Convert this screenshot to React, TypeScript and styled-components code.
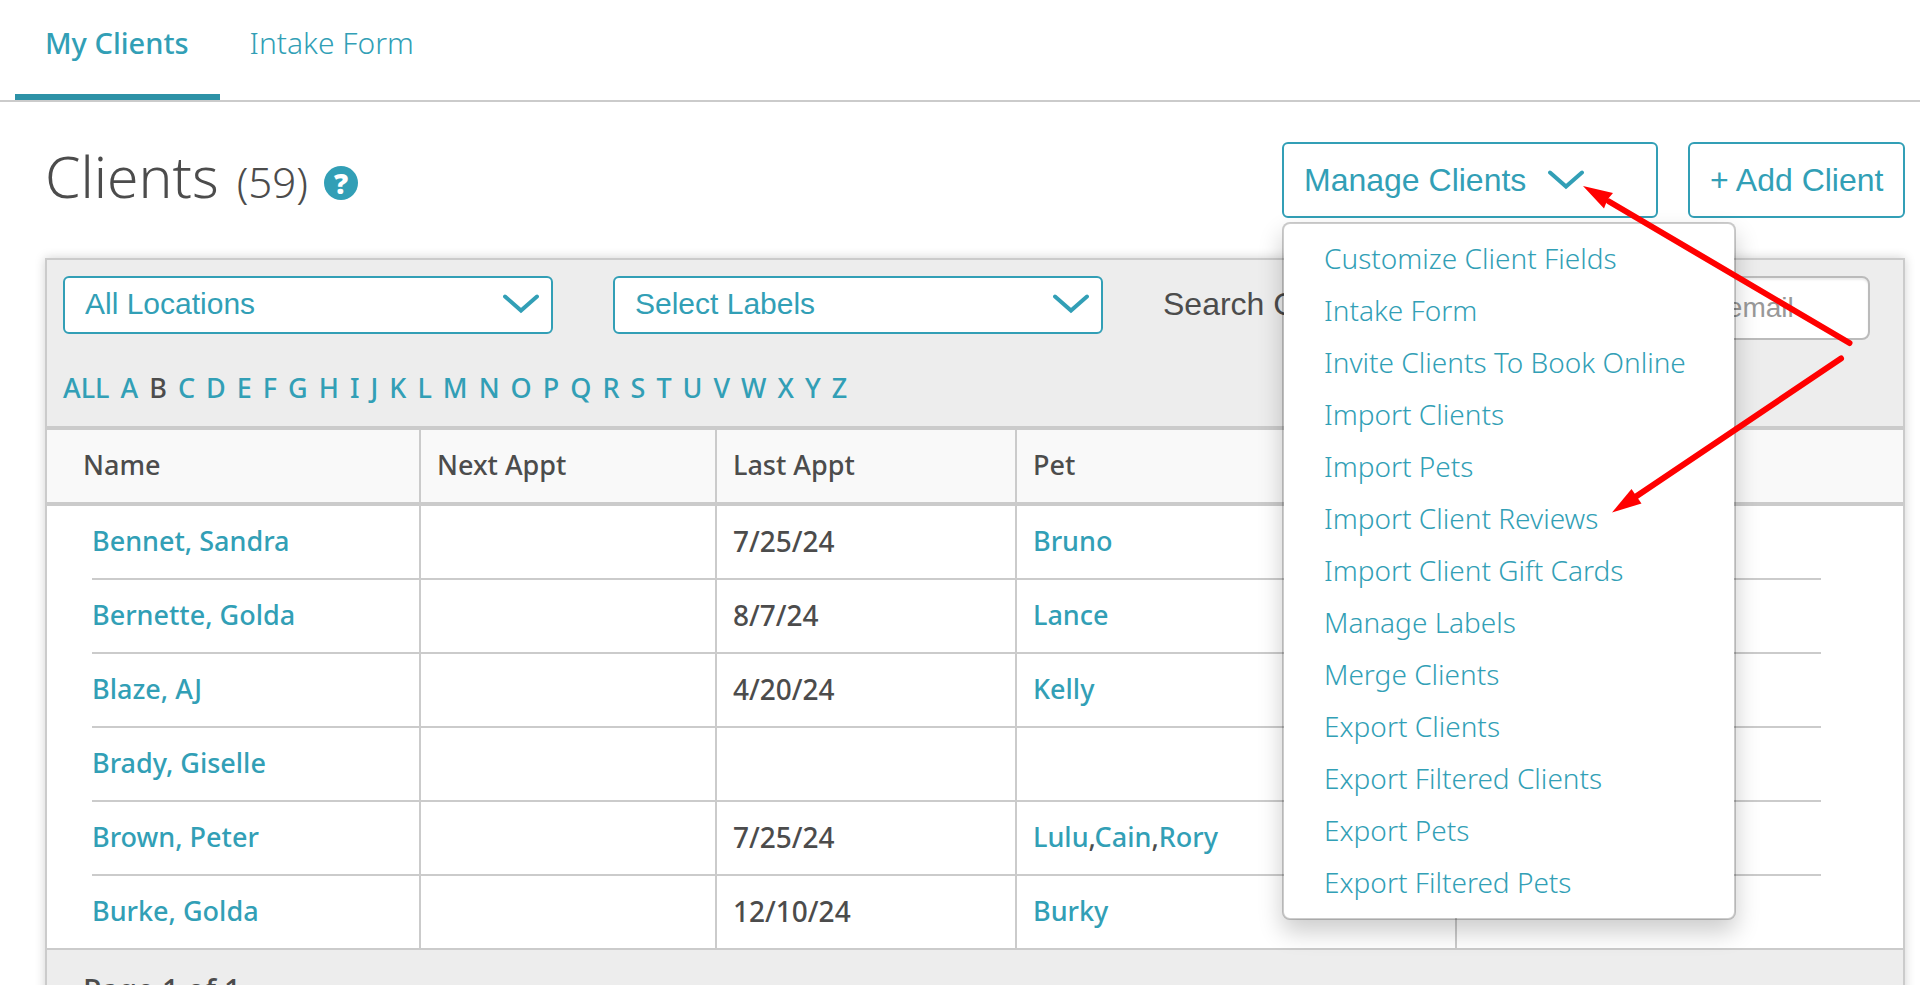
import React from 'react';
import styled, { createGlobalStyle } from 'styled-components';

const color = {
  teal: '#329fb6',
  tealDark: '#2d92a7',
  text: '#4c4c4c',
  line: '#cbcbcb',
  bar: '#ededed',
  head: '#f9f9f9',
  annotation: '#ff0000',
};
const humanist = '"Noto Sans", "Open Sans", sans-serif';
const grotesque = '"Liberation Sans", Arial, sans-serif';

const GlobalStyle = createGlobalStyle`
  *, *::before, *::after { box-sizing: border-box; }
  html { background: #fff; }
  body { margin: 0; font-family: ${humanist}; color: ${color.text}; overflow-x: hidden; }
  a { color: ${color.teal}; text-decoration: none; }
  h1, p, ul { margin: 0; padding: 0; }
`;

const Tabs = styled.nav`
  display: flex;
  height: 102px;
  padding-left: 15px;
  border-bottom: 2px solid ${color.line};
`;

const Tab = styled.a<{ $active?: boolean }>`
  padding: 23px 31px 0 30px;
  font-size: ${(p) => (p.$active ? 29 : 30)}px;
  line-height: 40px;
  font-weight: ${(p) => (p.$active ? 500 : 300)};
  border-bottom: 6px solid ${(p) => (p.$active ? color.tealDark : 'transparent')};
`;

const PageHeader = styled.header`
  display: flex;
  justify-content: space-between;
  align-items: flex-start;
  padding: 40px 15px 40px 45px;
`;

const TitleGroup = styled.div`
  display: flex;
  align-items: baseline;
  gap: 16px;
`;

const Title = styled.h1`
  display: flex;
  align-items: baseline;
  gap: 18px;
  font-size: 57px;
  line-height: 68px;
  font-weight: 300;
`;

const Count = styled.span`
  font-size: 42px;
  line-height: 40px;
`;

const HelpButton = styled.button`
  align-self: flex-end;
  width: 34px;
  height: 34px;
  margin-bottom: 10px;
  padding: 0;
  border: 0;
  border-radius: 50%;
  background: ${color.teal};
  color: #fff;
  font: 900 28px/34px ${humanist};
`;

const Actions = styled.div`
  display: flex;
  gap: 30px;
`;

const ActionButton = styled.button<{ $width: number }>`
  display: flex;
  align-items: center;
  gap: 22px;
  width: ${(p) => p.$width}px;
  height: 76px;
  padding: 0 20px;
  border: 2px solid ${color.teal};
  border-radius: 6px;
  background: #fff;
  color: ${color.teal};
  font: 32px/40px ${grotesque};
  white-space: nowrap;
`;

const MenuAnchor = styled.div`
  position: relative;
`;

const Menu = styled.ul`
  position: absolute;
  z-index: 2;
  top: 80px;
  left: 0;
  width: 454px;
  padding: 8px 0 10px;
  list-style: none;
  background: #fff;
  background-clip: padding-box;
  border: 2px solid rgba(0, 0, 0, 0.2);
  border-radius: 8px;
  box-shadow: 0 12px 24px rgba(0, 0, 0, 0.2);
`;

const MenuLink = styled.a`
  display: block;
  padding: 0 40px;
  font-size: 28px;
  line-height: 52px;
  font-weight: 300;
  white-space: nowrap;
`;

const Annotation = styled.svg`
  position: absolute;
  z-index: 3;
  top: 40px;
  left: 300px;
  overflow: visible;
  pointer-events: none;
`;

const Panel = styled.main`
  margin: 0 15px 0 45px;
  border: 2px solid ${color.line};
  box-shadow: 0 0 10px rgba(0, 0, 0, 0.18);
  background: #fff;
`;

const Toolbar = styled.div`
  padding: 16px 33px 20px 16px;
  background: ${color.bar};
  border-bottom: 4px solid ${color.line};
`;

const Filters = styled.div`
  display: flex;
  align-items: flex-start;
  gap: 60px;
`;

const SelectBox = styled.div`
  position: relative;
  flex: 0 1 490px;

  svg {
    position: absolute;
    top: 18px;
    right: 14px;
    pointer-events: none;
  }
`;

const Select = styled.select`
  display: block;
  appearance: none;
  width: 100%;
  height: 58px;
  padding: 0 60px 2px 20px;
  border: 2px solid ${color.teal};
  border-radius: 6px;
  background: #fff;
  color: ${color.teal};
  font: 30px/40px ${grotesque};
`;

const SearchField = styled.div`
  display: flex;
  flex: 1;
  gap: 8px;
  min-width: 0;
`;

const SearchLabel = styled.label`
  font: 32px/56px ${grotesque};
  white-space: nowrap;
`;

const SearchInput = styled.input`
  flex: 1;
  min-width: 0;
  height: 64px;
  padding: 0 8px;
  border: 2px solid #bbb;
  border-radius: 8px;
  background: #fff;
  box-shadow: inset 0 2px 2px rgba(0, 0, 0, 0.08);
  font: 28px/40px ${grotesque};

  &::placeholder { color: #999; opacity: 1; }
`;

const Alphabet = styled.nav`
  display: flex;
  gap: 11px;
  margin-top: 30px;
  font-size: 27px;
  line-height: 36px;
  font-weight: 500;
`;

const Letter = styled.a<{ $current?: boolean }>`
  color: ${(p) => (p.$current ? color.text : color.teal)};
`;

const ClientTable = styled.table`
  width: 100%;
  table-layout: fixed;
  border-collapse: separate;
  border-spacing: 0;
  font-size: 27px;
  line-height: 36px;
  font-weight: 500;
`;

const HeadCell = styled.th`
  height: 76px;
  padding: 0 16px 2px;
  text-align: left;
  font-weight: 500;
  background: ${color.head};
  border-bottom: 4px solid ${color.line};

  &:first-child { padding-left: 36px; }
  & + & { border-left: 2px solid ${color.line}; }
`;

const Cell = styled.td<{ $numeric?: boolean }>`
  padding: 0;
  font-size: ${(p) => (p.$numeric ? 28 : 27)}px;
  & + & { border-left: 2px solid ${color.line}; }
`;

const CellBody = styled.div`
  height: 74px;
  padding: 17px 16px;
  border-bottom: 2px solid ${color.line};

  td:first-child > & { margin-left: 45px; padding-left: 0; }
  td:last-child > & { margin-right: 82px; }
  tr:last-child > td > & { height: 72px; border-bottom: 0; }
`;

const Pager = styled.footer`
  padding: 22px 36px;
  background: ${color.bar};
  border-top: 2px solid ${color.line};
  font-size: 30px;
  line-height: 36px;
  font-weight: 500;
`;

const Chevron = () => (
  <svg width="36" height="20" viewBox="0 0 36 20" fill="none" aria-hidden="true">
    <path d="M2 2.5 18 16.5 34 2.5" stroke={color.teal} strokeWidth="4" strokeLinecap="round" />
  </svg>
);

const menuItems = [
  'Customize Client Fields',
  'Intake Form',
  'Invite Clients To Book Online',
  'Import Clients',
  'Import Pets',
  'Import Client Reviews',
  'Import Client Gift Cards',
  'Manage Labels',
  'Merge Clients',
  'Export Clients',
  'Export Filtered Clients',
  'Export Pets',
  'Export Filtered Pets',
];

const letters = ['ALL', ...'ABCDEFGHIJKLMNOPQRSTUVWXYZ'];

const clients = [
  { name: 'Bennet, Sandra', last: '7/25/24', pets: ['Bruno'] },
  { name: 'Bernette, Golda', last: '8/7/24', pets: ['Lance'] },
  { name: 'Blaze, AJ', last: '4/20/24', pets: ['Kelly'] },
  { name: 'Brady, Giselle', last: '', pets: [] },
  { name: 'Brown, Peter', last: '7/25/24', pets: ['Lulu', 'Cain', 'Rory'] },
  { name: 'Burke, Golda', last: '12/10/24', pets: ['Burky'] },
];

export default function App() {
  return (
    <>
      <GlobalStyle />
      <Tabs aria-label="Sections">
        <Tab href="#clients" $active aria-current="page">My Clients</Tab>
        <Tab href="#intake">Intake Form</Tab>
      </Tabs>

      <PageHeader>
        <TitleGroup>
          <Title>Clients <Count>(59)</Count></Title>
          <HelpButton type="button" aria-label="Help">?</HelpButton>
        </TitleGroup>
        <Actions>
          <MenuAnchor>
            <ActionButton type="button" $width={376} aria-haspopup="true" aria-expanded="true">
              Manage Clients
              <Chevron />
            </ActionButton>
            <Menu>
              {menuItems.map((item) => (
                <li key={item}><MenuLink href="#menu">{item}</MenuLink></li>
              ))}
            </Menu>
            <Annotation width="280" height="340" viewBox="0 0 280 340" fill={color.annotation} aria-hidden="true">
              <path d="M27 19.5 267.5 161" stroke={color.annotation} strokeWidth="6" strokeLinecap="round" />
              <path d="M1 4 31 11 25.5 17.5 22 26.5Z" />
              <path d="M54 314.5 259 176.5" stroke={color.annotation} strokeWidth="6" strokeLinecap="round" />
              <path d="M30 330.5 49.5 307 59.5 321.5Z" />
            </Annotation>
          </MenuAnchor>
          <ActionButton type="button" $width={217}>+ Add Client</ActionButton>
        </Actions>
      </PageHeader>

      <Panel>
        <Toolbar>
          <Filters>
            <SelectBox>
              <Select aria-label="Location"><option>All Locations</option></Select>
              <Chevron />
            </SelectBox>
            <SelectBox>
              <Select aria-label="Labels"><option>Select Labels</option></Select>
              <Chevron />
            </SelectBox>
            <SearchField>
              <SearchLabel htmlFor="client-search">Search Clients</SearchLabel>
              <SearchInput id="client-search" type="text" placeholder="Search by name, phone or email" />
            </SearchField>
          </Filters>
          <Alphabet aria-label="Filter by letter">
            {letters.map((l) => (
              <Letter key={l} href="#letter" $current={l === 'B'}>{l}</Letter>
            ))}
          </Alphabet>
        </Toolbar>

        <ClientTable>
          <colgroup>
            <col width="372" />
            <col width="296" />
            <col width="300" />
            <col width="440" />
            <col />
          </colgroup>
          <thead>
            <tr>
              <HeadCell>Name</HeadCell>
              <HeadCell>Next Appt</HeadCell>
              <HeadCell>Last Appt</HeadCell>
              <HeadCell>Pet</HeadCell>
              <HeadCell />
            </tr>
          </thead>
          <tbody>
            {clients.map((c) => (
              <tr key={c.name}>
                <Cell><CellBody><a href="#client">{c.name}</a></CellBody></Cell>
                <Cell $numeric><CellBody /></Cell>
                <Cell $numeric><CellBody>{c.last}</CellBody></Cell>
                <Cell>
                  <CellBody>
                    {c.pets.map((pet, i) => (
                      <React.Fragment key={pet}>
                        {i > 0 && ','}
                        <a href="#pet">{pet}</a>
                      </React.Fragment>
                    ))}
                  </CellBody>
                </Cell>
                <Cell><CellBody /></Cell>
              </tr>
            ))}
          </tbody>
        </ClientTable>
        <Pager>Page 1 of 1</Pager>
      </Panel>
    </>
  );
}
